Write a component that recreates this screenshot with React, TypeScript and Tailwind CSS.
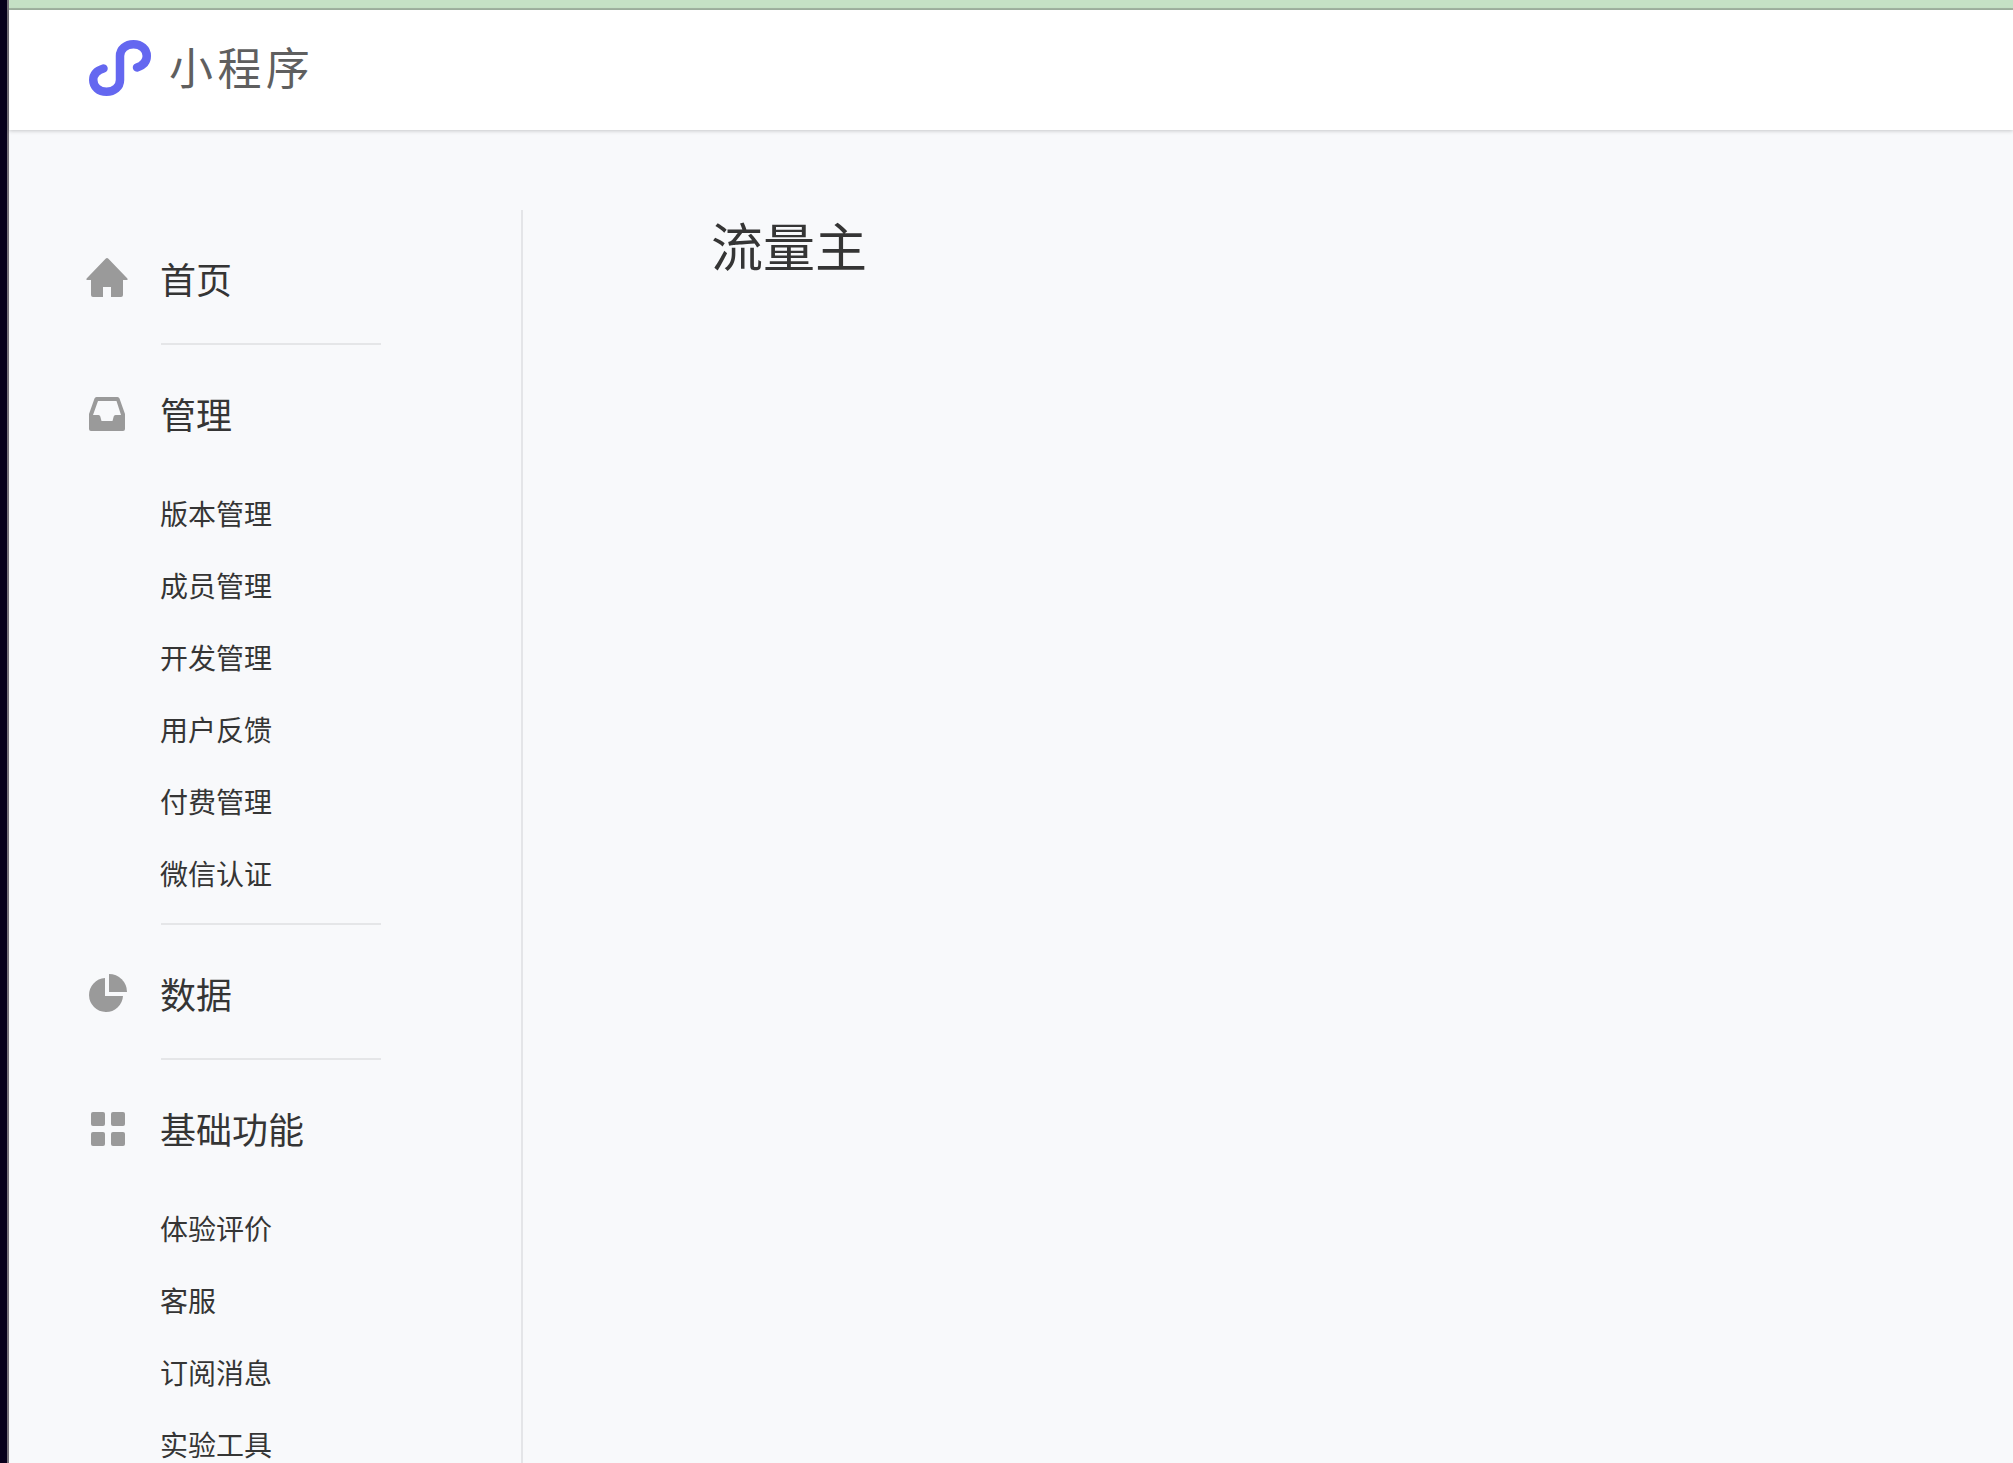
import { ReactNode } from "react";

interface MenuSection {
    title: string
    icon: ReactNode
    items: string[]
}

const HomeIcon = () => (
    <svg viewBox="0 0 48 48" className="size-12 shrink-0 fill-[#9a9a9a]" aria-hidden="true">
        <path d="M22.6 1.7Q24 .4 25.4 1.7L44.4 21.4Q45.4 23 43.6 23H40V38Q40 40 38 40H28V30H20V40H10Q8 40 8 38V23H4.400Q2.600 23 3.600 21.400Z" />
    </svg>
);

const InboxIcon = () => (
    <svg viewBox="0 0 48 48" className="size-12 shrink-0 fill-[#9a9a9a]" aria-hidden="true">
        <path
            fillRule="evenodd"
            d="M13.500 5H34.500Q36 5 36.500 6.500L42 22V37Q42 39 40 39H8Q6 39 6 37V22L11.500 6.500Q12 5 13.500 5ZM15 9L10 23H15.500Q17 23 17.300 24.500L18.500 29H29.500L30.700 24.500Q31 23 32.500 23H38L33.500 9Z"
        />
    </svg>
);

const PieIcon = () => (
    <svg viewBox="0 0 48 48" className="size-12 shrink-0 fill-[#9a9a9a]" aria-hidden="true">
        <path d="M22 6V24H40A17 17 0 1 1 22 6Z" />
        <path d="M26 2A18 18 0 0 1 44 20H26Z" />
    </svg>
);

const GridIcon = () => (
    <svg viewBox="0 0 48 48" className="size-12 shrink-0 fill-[#9a9a9a]" aria-hidden="true">
        <rect x="8" y="5" width="14" height="14" rx="2" />
        <rect x="28" y="5" width="14" height="14" rx="2" />
        <rect x="8" y="25" width="14" height="14" rx="2" />
        <rect x="28" y="25" width="14" height="14" rx="2" />
    </svg>
);

const sections: MenuSection[] = [
    { title: "首页", icon: <HomeIcon />, items: [] },
    {
        title: "管理",
        icon: <InboxIcon />,
        items: ["版本管理", "成员管理", "开发管理", "用户反馈", "付费管理", "微信认证"],
    },
    { title: "数据", icon: <PieIcon />, items: [] },
    {
        title: "基础功能",
        icon: <GridIcon />,
        items: ["体验评价", "客服", "订阅消息", "实验工具"],
    },
];

export default function App() {
    return (
        <div className="flex h-screen overflow-hidden bg-[#07001c] pl-[7px] font-['Noto_Sans_CJK_SC',sans-serif] text-[#353535]">
            <div className="flex min-w-0 flex-1 flex-col border-l-2 border-[#76717a] bg-[#f8f9fb]">
                <div className="h-[10px] shrink-0 border-b-2 border-[#a3b5a3] bg-[#c5e1c5]" />
                <header className="z-10 flex h-[120px] shrink-0 items-center bg-white pb-1 pl-20 shadow-[0_1px_4px_rgba(0,0,0,0.2)]">
                    <a href="#" className="flex items-center gap-[18px] text-[#5f5f5f]">
                        <svg viewBox="0 0 62 56" className="h-14 w-[62px]" aria-hidden="true">
                            <path
                                d="M48 27.500C54 25.500 57.750 22 57.750 16C57.750 9 52 4.250 44.500 4.250C37 4.250 31 9 31 16V40C31 47 25 51.750 17.500 51.750C10 51.750 4.250 47 4.250 40C4.250 34 8 30.500 14.500 28.500"
                                fill="none"
                                stroke="#6467f0"
                                strokeWidth="8.5"
                                strokeLinecap="round"
                            />
                        </svg>
                        <span className="pb-1 text-[44px] leading-[64px] tracking-widest">小程序</span>
                    </a>
                </header>
                <div className="flex min-h-0 flex-1 pt-20">
                    <nav className="w-[514px] shrink-0 border-r-2 border-[#e4e5e8] pl-[74px]">
                        {sections.map((section, index) => (
                            <section key={section.title}>
                                {index > 0 && <hr className="ml-[78px] w-[220px] border-t-2 border-[#e5e6e8]" />}
                                <h2 className="pt-[47px] pb-[38px]">
                                    <a href="#" className="flex items-start gap-[29px] text-[36px] leading-[42px]">
                                        {section.icon}
                                        {section.title}
                                    </a>
                                </h2>
                                {section.items.length > 0 && (
                                    <ul className="-mt-px pb-[14px] pl-[77px] text-[28px] leading-[72px]">
                                        {section.items.map((item) => (
                                            <li key={item}>
                                                <a href="#">{item}</a>
                                            </li>
                                        ))}
                                    </ul>
                                )}
                            </section>
                        ))}
                    </nav>
                    <main className="flex-1 pl-[188px]">
                        <h1 className="text-[52px] leading-[70px]">流量主</h1>
                    </main>
                </div>
            </div>
        </div>
    );
}
